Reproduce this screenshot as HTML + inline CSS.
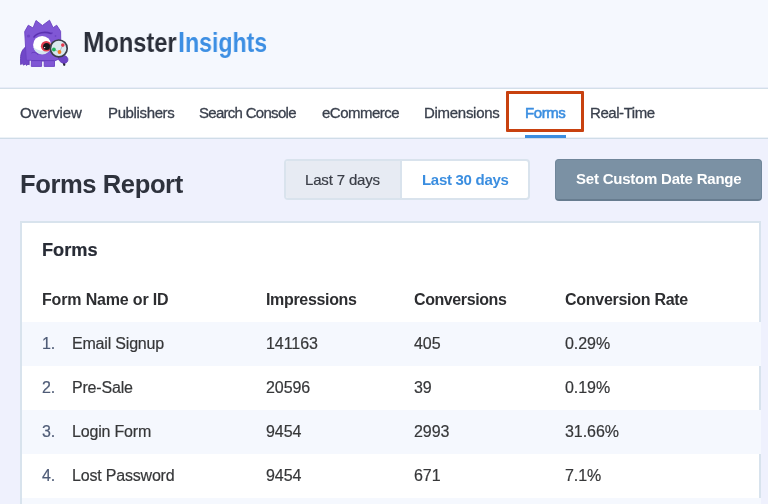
<!DOCTYPE html>
<html><head><meta charset="utf-8">
<style>
*{margin:0;padding:0;box-sizing:border-box}
.t,.nv,.th,.td,.logo,.title{will-change:transform}
html,body{width:768px;height:504px;overflow:hidden;background:#eff1fd;font-family:"Liberation Sans",sans-serif;color:#393f4c}
.abs{position:absolute;white-space:nowrap}
.t{position:absolute;white-space:nowrap;line-height:1}
#hdr{position:absolute;left:0;top:0;width:768px;height:88px;background:#f5f8fe}
#nav{position:absolute;left:0;top:88px;width:768px;height:51px;background:#fff;border-top:1px solid #d3dfe9;border-bottom:1px solid #cfdce8;box-shadow:0 -1px 0 #e8ecf8, inset 0 -1px 0 #edf2f7}
.nv{position:absolute;white-space:nowrap;line-height:1;top:105.1px;font-size:15px;color:#3a404d}
.logo{position:absolute;white-space:nowrap;line-height:29.5px;top:26.8px;font-size:27px;font-weight:bold;transform-origin:0 0}
.title{position:absolute;left:20.4px;top:171.7px;font-size:25.6px;font-weight:bold;line-height:1;color:#2e323d;letter-spacing:-0.42px;white-space:nowrap}
#grp{position:absolute;left:284px;top:159px;width:246px;height:41px;border:2px solid #d9e3ed;border-radius:4px;background:#fff;overflow:hidden}
#g1{position:absolute;left:0;top:0;width:116px;height:37px;background:#e7ebf3;border-right:2px solid #d9e3ed}
#btn{position:absolute;left:555px;top:159px;width:207px;height:41.5px;background:#7b91a4;border-radius:4px;border:1px solid #70869a;border-bottom:2px solid #677c8f}
#panel{position:absolute;left:20px;top:221px;width:741px;height:300px;background:#fff;border:2px solid #d8e3ed}
.stripe{position:absolute;left:22px;width:739px;height:44px;background:#f5f8fe}
.th{position:absolute;white-space:nowrap;top:291.6px;font-size:16px;font-weight:bold;line-height:1;color:#2d2e31}
.td{position:absolute;white-space:nowrap;font-size:16px;line-height:1;color:#363739;letter-spacing:-0.19px}
.d{letter-spacing:-0.06px}
.num{color:#4e5b76}
.bstroke{-webkit-text-stroke:0.2px currentColor}
.td{-webkit-text-stroke:0.2px currentColor}
.nv{-webkit-text-stroke:0.3px currentColor}
</style></head><body>
<div id="hdr"></div>
<svg class="abs" style="left:16px;top:16px" width="56" height="56" viewBox="16 16 56 56">
  <path d="M26.6 46.5 C22.5 48.5 20.6 53 20.5 58.5 L20.6 64.6 L22.3 63.6 L23.6 65.2 L25.2 64 L26.6 65.4 L28 64.2 L29.2 64.8 L29.2 58 Z" fill="#7047c8" stroke="#5c34b0" stroke-width="0.8" stroke-linejoin="round"/>
  <path d="M24.7 31.6 L28.3 25.2 L33 28 L36 20.5 L42.4 25.5 L49.5 20.2 L53.1 27.7 L56.7 25.2 L60.6 31.3 L61 58 L54.5 61 L54.5 66.4 L44.2 66.4 L44.2 61 L41.6 61 L41.6 66.4 L31.3 66.4 L31.3 60.3 L26.3 60.3 Z" fill="#8057d5" stroke="#6a42c2" stroke-width="0.9" stroke-linejoin="round"/>
  <path d="M31.3 60.6 L54.5 60.6" stroke="#6038b8" stroke-width="0.8"/>
  <circle cx="28.5" cy="36" r="1.6" fill="#6e45c6"/>
  <circle cx="52" cy="33" r="0.9" fill="#6e45c6"/>
  <circle cx="55.5" cy="36" r="0.9" fill="#6e45c6"/>
  <path d="M34 37 C37 32.5 45 31.2 51 33.5" fill="none" stroke="#5a31b0" stroke-width="1.6" stroke-linecap="round"/>
  <circle cx="42.1" cy="44.9" r="9" fill="#ffffff"/>
  <path d="M33.4 47 A9 9 0 0 0 51 47.5 C46 52 39 52 33.4 47 Z" fill="#d5e6ee"/>
  <path d="M31.5 53 C34 51.5 37 53 38.5 55" fill="none" stroke="#6038b8" stroke-width="0.9"/>
  <circle cx="46.2" cy="46.2" r="5.3" fill="#e23d4f"/>
  <circle cx="46.6" cy="46.4" r="3.5" fill="#17171c"/>
  <circle cx="44.6" cy="47.6" r="0.7" fill="#ffffff"/>
  <path d="M62.2 56.5 L64.3 64.8" stroke="#24262e" stroke-width="2.2" stroke-linecap="round"/>
  <path d="M58.5 57 C60 54.5 66.5 54.5 67.8 58.5 C68.5 61.5 66.5 63.5 63.8 63.2 C61 63 58 60.5 58.5 57 Z" fill="#6d44c6" stroke="#5a32b0" stroke-width="0.7"/>
  <circle cx="58.8" cy="48.4" r="8.4" fill="#d9e8ee" stroke="#3b3f4a" stroke-width="1.7"/>
  <path d="M53.9 49.5 L59.5 52 L62.8 45.1" fill="none" stroke="#7f8a92" stroke-width="0.5"/>
  <circle cx="53.9" cy="49.5" r="1.9" fill="#1fb45a"/>
  <circle cx="59.5" cy="52" r="1.9" fill="#f47b20"/>
  <circle cx="62.8" cy="45.1" r="1.8" fill="#e43a4f"/>
</svg>
<span class="logo" style="left:82.6px;color:#2b2f3a;transform:scaleX(0.874)"><span style="font-size:29.5px">M</span>onster</span>
<span class="logo" style="left:177.6px;color:#3d8fe3;transform:scaleX(0.855)"><span style="font-size:29.5px">I</span>nsights</span>

<div id="nav"></div>
<span class="nv" style="left:20px;letter-spacing:-0.086px">Overview</span>
<span class="nv" style="left:108.3px;letter-spacing:-0.367px">Publishers</span>
<span class="nv" style="left:199px;letter-spacing:-0.712px">Search Console</span>
<span class="nv" style="left:322.3px;letter-spacing:-0.5px">eCommerce</span>
<span class="nv" style="left:424.3px;letter-spacing:-0.289px">Dimensions</span>
<span class="nv" style="left:524.8px;letter-spacing:-0.42px;color:#3b8ee0;-webkit-text-stroke:0.55px #3b8ee0">Forms</span>
<span class="nv" style="left:590.3px;letter-spacing:-0.438px">Real-Time</span>
<div style="position:absolute;left:505.6px;top:91.3px;width:78.8px;height:40.8px;border:3.3px solid #c8410f;border-radius:1px"></div>
<div style="position:absolute;left:525.3px;top:135.4px;width:40.4px;height:2.2px;background:#3b8ee0"></div>

<div class="title">Forms Report</div>
<div id="grp"><div id="g1"></div></div>
<span class="t" style="left:305px;top:171.7px;font-size:15px;letter-spacing:-0.16px;color:#3a3e47;-webkit-text-stroke:0.2px currentColor">Last 7 days</span>
<span class="t" style="left:421.8px;top:171.6px;font-size:15px;font-weight:bold;letter-spacing:-0.29px;color:#3b8ee0">Last 30 days</span>
<div id="btn"></div>
<span class="t" style="left:575.5px;top:170.8px;font-size:15px;font-weight:bold;letter-spacing:-0.22px;color:#fff">Set Custom Date Range</span>

<div id="panel"></div>
<div class="stripe" style="top:322px"></div>
<div class="stripe" style="top:410px"></div>
<div class="stripe" style="top:498px"></div>
<span class="t bstroke" style="left:42.4px;top:241px;font-size:18.2px;font-weight:bold;color:#282c36">Forms</span>
<span class="th" style="left:42.2px;letter-spacing:-0.16px">Form Name or ID</span>
<span class="th" style="left:265.7px;letter-spacing:-0.33px">Impressions</span>
<span class="th" style="left:414px;letter-spacing:-0.41px">Conversions</span>
<span class="th" style="left:565px;letter-spacing:-0.28px">Conversion Rate</span>

<span class="td num" style="left:41.5px;top:335.8px">1.</span>
<span class="td" style="left:72.2px;top:335.8px">Email Signup</span>
<span class="td d" style="left:266.3px;top:335.8px">141163</span>
<span class="td d" style="left:414.3px;top:335.8px">405</span>
<span class="td d" style="left:565.3px;top:335.8px">0.29%</span>

<span class="td num" style="left:41.5px;top:379.8px">2.</span>
<span class="td" style="left:72.2px;top:379.8px">Pre-Sale</span>
<span class="td d" style="left:266.3px;top:379.8px">20596</span>
<span class="td d" style="left:414.3px;top:379.8px">39</span>
<span class="td d" style="left:565.3px;top:379.8px">0.19%</span>

<span class="td num" style="left:41.5px;top:423.8px">3.</span>
<span class="td" style="left:72.2px;top:423.8px">Login Form</span>
<span class="td d" style="left:266.3px;top:423.8px">9454</span>
<span class="td d" style="left:414.3px;top:423.8px">2993</span>
<span class="td d" style="left:565.3px;top:423.8px">31.66%</span>

<span class="td num" style="left:41.5px;top:467.8px">4.</span>
<span class="td" style="left:72.2px;top:467.8px">Lost Password</span>
<span class="td d" style="left:266.3px;top:467.8px">9454</span>
<span class="td d" style="left:414.3px;top:467.8px">671</span>
<span class="td d" style="left:565.3px;top:467.8px">7.1%</span>
</body></html>
